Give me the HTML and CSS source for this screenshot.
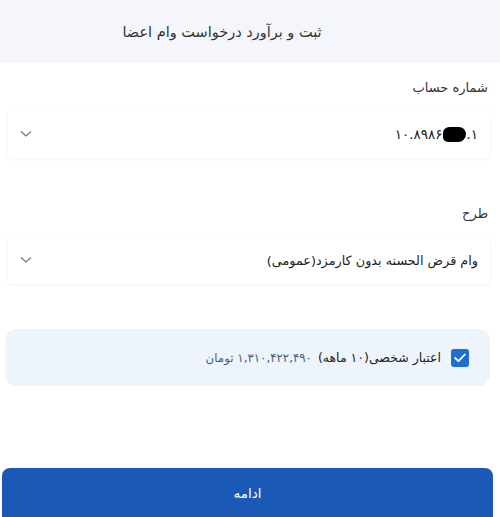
FILE: index.html
```html
<!DOCTYPE html>
<html lang="fa" dir="rtl">
<head>
<meta charset="utf-8">
<title>ثبت و برآورد درخواست وام اعضا</title>
<link rel="stylesheet" href="styles.css">
</head>
<body>
<header class="topbar">
  <h1 class="title">ثبت و برآورد درخواست وام اعضا</h1>
</header>
<main class="form">
  <section class="field field-account">
    <label class="label">شماره حساب</label>
    <div class="select">
      <span class="value"><span class="acct">۱۰.۸۹۸۶<span class="blot"></span>.۱</span></span>
      <svg class="chev" width="12" height="8" viewBox="0 0 12 8"><path d="M1 1.5 L6 6 L11 1.5" fill="none" stroke="#777" stroke-width="1.2"/></svg>
    </div>
  </section>
  <section class="field field-plan">
    <label class="label">طرح</label>
    <div class="select">
      <span class="value plan">وام قرض الحسنه بدون کارمزد(عمومی)</span>
      <svg class="chev" width="12" height="8" viewBox="0 0 12 8"><path d="M1 1.5 L6 6 L11 1.5" fill="none" stroke="#777" stroke-width="1.2"/></svg>
    </div>
  </section>
  <div class="option">
    <span class="check"><svg width="12" height="10" viewBox="0 0 12 10"><path d="M1.2 5 L4.5 8.2 L10.8 1.5" fill="none" stroke="#fff" stroke-width="1.8" stroke-linecap="round" stroke-linejoin="round"/></svg></span>
    <span class="opt-name">اعتبار شخصی(۱۰ ماهه)</span>
    <span class="opt-amount">۱,۳۱۰,۴۲۲,۴۹۰ تومان</span>
  </div>
</main>
<footer class="actions">
  <button class="btn">ادامه</button>
</footer>
</body>
</html>
```
FILE: styles.css
```css
* { box-sizing: border-box; }
html, body { margin: 0; padding: 0; }
body {
  width: 500px;
  height: 517px;
  overflow: hidden;
  background: #fff;
  font-family: "DejaVu Sans", "Noto Sans", sans-serif;
  color: #2b2b2b;
  display: flex;
  flex-direction: column;
}
.topbar {
  height: 63px;
  background: #f4f6fb;
  display: flex;
  align-items: center;
  justify-content: center;
  padding-right: 56px;
}
.title {
  margin: 0;
  font-size: 14.5px;
  font-weight: normal;
  color: #333;
}
.form {
  display: flex;
  flex-direction: column;
  padding: 0 10px 0 8px;
}
.field { display: flex; flex-direction: column; }
.field-account { margin-top: 14px; }
.field-plan { margin-top: 45px; }
.label {
  font-size: 13px;
  color: #333;
  padding-right: 2px;
  margin-left: -2px;
  height: 22px;
  line-height: 22px;
  margin-bottom: 11px;
}
.select {
  height: 48px;
  display: flex;
  align-items: center;
  justify-content: space-between;
  padding: 0 12px 0 12px;
  background: #fff;
  border-radius: 4px;
  box-shadow: 0 1px 3px rgba(0,0,0,0.06), 0 0 1px rgba(0,0,0,0.05);
  font-size: 13.5px;
  color: #222;
}
.plan { font-size: 12.8px; }
.acct {
  direction: ltr;
  unicode-bidi: isolate;
  display: inline-flex;
  align-items: center;
}
.blot {
  display: inline-block;
  width: 23px;
  height: 15px;
  background: #000;
  border-radius: 8px 9px 10px 6px;
  margin: 0 0 0 1px;
}
.chev { display: block; }
.option {
  margin: 45px 0 0 -3px;
  height: 57px;
  background: #eef4fc;
  border-radius: 12px;
  display: flex;
  align-items: center;
  padding-right: 21px;
}
.check {
  width: 18px;
  height: 18px;
  background: #1f6ed4;
  border-radius: 3px;
  display: flex;
  align-items: center;
  justify-content: center;
  margin-left: 10px;
}
.opt-name {
  font-size: 12.5px;
  color: #222;
  margin-left: 6px;
}
.opt-amount {
  font-size: 11.8px;
  color: #4b5b7c;
}
.actions {
  margin-top: auto;
  padding: 0 7px 0 2px;
}
.btn {
  display: block;
  width: 100%;
  height: 49px;
  border: none;
  border-radius: 8px 8px 0 0;
  background: #1b59b6;
  color: #fff;
  font-family: inherit;
  font-size: 13.5px;
  padding-bottom: 1px;
}
```
